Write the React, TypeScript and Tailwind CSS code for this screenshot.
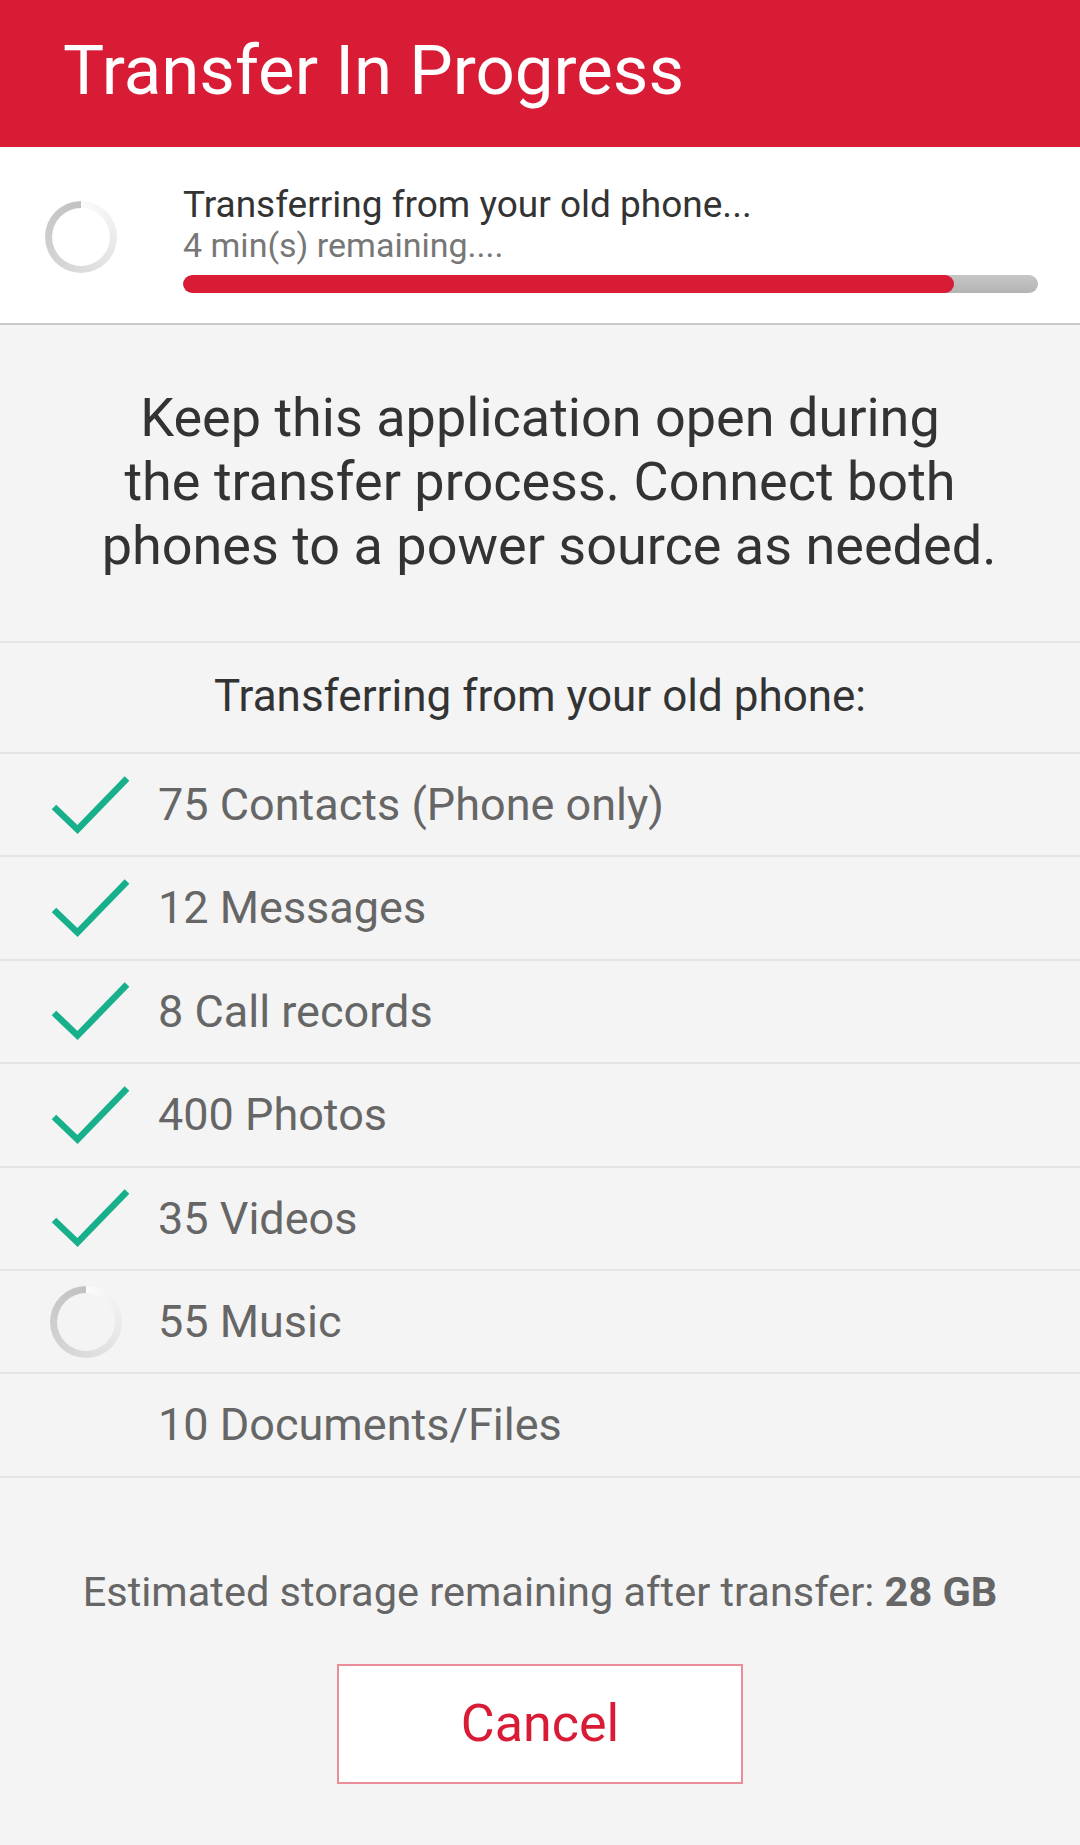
import React from "react";

const items: { label: string; state: "done" | "loading" | "pending" }[] = [
  { label: "75 Contacts (Phone only)", state: "done" },
  { label: "12 Messages", state: "done" },
  { label: "8 Call records", state: "done" },
  { label: "400 Photos", state: "done" },
  { label: "35 Videos", state: "done" },
  { label: "55 Music", state: "loading" },
  { label: "10 Documents/Files", state: "pending" },
];

function Check() {
  return (
    <svg width="80" height="80" viewBox="0 0 80 80" fill="none">
      <path
        d="M4 42 L27.5 64.5 L77 13.5"
        stroke="#17b08b"
        strokeWidth="6.5"
        strokeLinecap="butt"
        strokeLinejoin="miter"
      />
    </svg>
  );
}

function Spinner({ inner }: { inner: string }) {
  return (
    <div className="w-[72px] h-[72px] rounded-full bg-[conic-gradient(#fbfbfb,#e2e2e2_40%,#cfcfcf_70%,#c2c2c2)] flex items-center justify-center">
      <div className={`w-[58px] h-[58px] rounded-full ${inner}`} />
    </div>
  );
}

export default function App() {
  return (
    <div
      className="w-[1080px] h-[1845px] bg-[#f4f4f4] flex flex-col"
      style={{ fontFamily: "Roboto, 'Noto Sans', sans-serif" }}
    >
      {/* Header */}
      <div className="h-[147px] bg-[#d91c36] pl-[63px] pt-[37px]">
        <div className="text-white text-[69px] leading-[68px]">Transfer In Progress</div>
      </div>

      {/* Progress card */}
      <div className="h-[178px] bg-white border-b-2 border-[#c9c9c9] flex pl-[45px] pr-[42px]">
        <div className="mt-[54px]">
          <Spinner inner="bg-white" />
        </div>
        <div className="flex-1 ml-[66px] pt-[38px]">
          <div className="text-[37px] leading-[40px] text-[#333333]">Transferring from your old phone...</div>
          <div className="text-[34px] leading-[40px] text-[#777777]">4 min(s) remaining....</div>
          <div className="mt-[10px] h-[18px] rounded-full bg-[linear-gradient(#c6c6c6,#b4b4b4)] overflow-hidden">
            <div className="h-full rounded-full bg-[#d91c36] w-[90.2%]" />
          </div>
        </div>
      </div>

      {/* Info paragraph */}
      <div className="h-[318px] border-b-2 border-[#e4e4e4] pt-[61px] text-center text-[54px] leading-[64px] text-[#333333]">
        <div>Keep this application open during</div>
        <div>the transfer process. Connect both</div>
        <div className="pl-[18px]">phones to a power source as needed.</div>
      </div>

      {/* Subheading */}
      <div className="h-[111px] border-b-2 border-[#e4e4e4] flex items-center justify-center pb-[3px] text-[44px] text-[#333333]">
        Transferring from your old phone:
      </div>

      {/* List */}
      {items.map((it) => (
        <div
          key={it.label}
          className="h-[103.4px] border-b-2 border-[#e4e4e4] flex items-center pl-[50px]"
        >
          <div className="w-[80px] h-[80px] flex items-center justify-start">
            {it.state === "done" && <Check />}
            {it.state === "loading" && <Spinner inner="bg-[#f4f4f4]" />}
          </div>
          <div className="ml-[28px] text-[45px] text-[#666666]">{it.label}</div>
        </div>
      ))}

      {/* Estimated storage */}
      <div className="mt-[90px] text-center text-[41.5px] leading-[48px] text-[#666666]">
        Estimated storage remaining after transfer: <span className="font-bold">28 GB</span>
      </div>

      {/* Cancel */}
      <div className="mt-[48px] flex justify-center">
        <button className="w-[406px] h-[120px] bg-white border-2 border-[#eb8c98] text-[#d91c36] text-[52px]">
          Cancel
        </button>
      </div>
    </div>
  );
}
